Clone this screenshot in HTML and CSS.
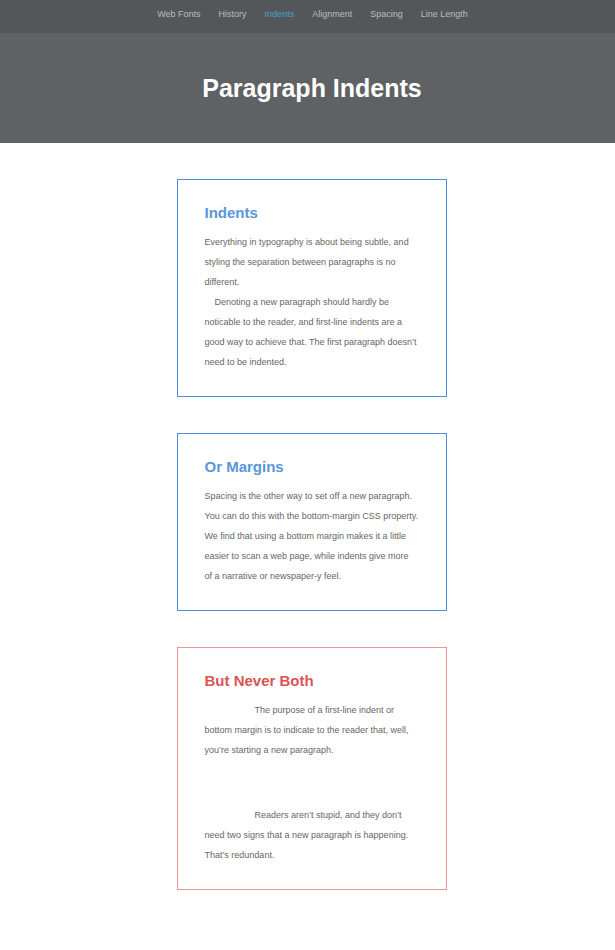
FILE: index.html
```html
<!DOCTYPE html>
<html>
<head>
<meta charset="utf-8">
<link rel="stylesheet" href="styles.css">
</head>
<body>
<nav class="nav">
  <a href="#">Web Fonts</a>
  <a href="#">History</a>
  <a href="#" class="active">Indents</a>
  <a href="#">Alignment</a>
  <a href="#">Spacing</a>
  <a href="#">Line Length</a>
</nav>
<header class="hero">
  <h1>Paragraph Indents</h1>
</header>
<main class="content">
  <section class="card indents">
    <h2>Indents</h2>
    <p>Everything in typography is about being subtle, and styling the separation between paragraphs is no different.</p>
    <p>Denoting a new paragraph should hardly be noticable to the reader, and first-line indents are a good way to achieve that. The first paragraph doesn’t need to be indented.</p>
  </section>
  <section class="card margins">
    <h2>Or Margins</h2>
    <p>Spacing is the other way to set off a new paragraph. You can do this with the bottom-margin CSS property. We find that using a bottom margin makes it a little easier to scan a web page, while indents give more of a narrative or newspaper-y feel.</p>
  </section>
  <section class="card both">
    <h2>But Never Both</h2>
    <p>The purpose of a first-line indent or bottom margin is to indicate to the reader that, well, you’re starting a new paragraph.</p>
    <p>Readers aren’t stupid, and they don’t need two signs that a new paragraph is happening. That’s redundant.</p>
  </section>
</main>
</body>
</html>
```
FILE: styles.css
```css
* { box-sizing: border-box; }
body {
  margin: 0;
  font-family: "Liberation Sans", Arial, sans-serif;
  background: #fff;
}
.nav {
  height: 33px;
  background: #54575a;
  display: flex;
  justify-content: center;
  align-items: center;
  gap: 18px;
  padding: 0 0 6px 10px;
}
.nav a {
  color: #b9bcbf;
  text-decoration: none;
  font-size: 9px;
}
.nav a.active { color: #4aa0c8; }
.hero {
  height: 110px;
  background: #5f6264;
  display: flex;
  align-items: center;
  justify-content: center;
  padding-left: 9px;
}
.hero h1 {
  margin: 0;
  color: #fff;
  font-size: 25px;
  font-weight: bold;
}
.content {
  display: flex;
  flex-direction: column;
  align-items: center;
  gap: 36px;
  padding: 36px 0 40px 8px;
}
.card {
  width: 270px;
  border: 1px solid #4a8fdb;
  padding: 24px 27px 24px 27px;
}
.card h2 {
  margin: 0 0 10px;
  font-size: 15px;
  line-height: 18px;
  color: #5a96da;
}
.card p {
  margin: 0;
  font-size: 9px;
  line-height: 20px;
  color: #666;
}
.indents p + p { text-indent: 10px; }
.both { border-color: #f0949a; }
.both h2 { color: #db5353; }
.both p { text-indent: 50px; margin-bottom: 45px; }
.both p:last-child { margin-bottom: 0; }
```
